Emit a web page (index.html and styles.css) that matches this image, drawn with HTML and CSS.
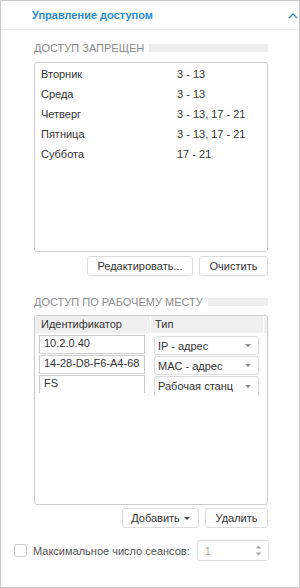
FILE: index.html
```html
<!DOCTYPE html>
<html>

<head>
  <meta charset="utf-8">
  <link rel="stylesheet" href="styles.css">
</head>

<body>

  <div id="panel">

    <div class="panelHeader">
      <span class="panelTitle">Управление доступом</span>
      <svg class="chevron" width="10" height="7" viewBox="0 0 10 7">
        <path d="M1 6 L5 2 L9 6" fill="none" stroke="#2a8ad4" stroke-width="1.4" />
      </svg>
    </div>

    <div class="section">
      <div class="sectionTitle">
        <span>ДОСТУП ЗАПРЕЩЕН</span>
        <div class="titleBar"></div>
      </div>

      <div class="listBox">
        <div class="listRow"><span>Вторник</span><span>3 - 13</span></div>
        <div class="listRow"><span>Среда</span><span>3 - 13</span></div>
        <div class="listRow"><span>Четверг</span><span>3 - 13, 17 - 21</span></div>
        <div class="listRow"><span>Пятница</span><span>3 - 13, 17 - 21</span></div>
        <div class="listRow"><span>Суббота</span><span>17 - 21</span></div>
      </div>

      <div class="buttons">
        <button class="btn" id="editBtn">Редактировать...</button>
        <button class="btn" id="clearBtn">Очистить</button>
      </div>
    </div>

    <div class="section">
      <div class="sectionTitle second">
        <span>ДОСТУП ПО РАБОЧЕМУ МЕСТУ</span>
        <div class="titleBar"></div>
      </div>

      <div class="tableBox">
        <div class="tableHead">
          <div class="colId">Идентификатор</div>
          <div class="colType">Тип</div>
          <div class="colRest"></div>
        </div>
        <div class="tableRow">
          <div class="cellInput">10.2.0.40</div>
          <div class="cellSelect"><span>IP - адрес</span><i class="caret"></i></div>
        </div>
        <div class="tableRow">
          <div class="cellInput">14-28-D8-F6-A4-68</div>
          <div class="cellSelect"><span>MAC - адрес</span><i class="caret"></i></div>
        </div>
        <div class="tableRow last">
          <div class="cellInput">FS</div>
          <div class="cellSelect"><span>Рабочая станц</span><i class="caret"></i></div>
        </div>
      </div>

      <div class="buttons second">
        <button class="btn" id="addBtn">Добавить <i class="caret dark"></i></button>
        <button class="btn" id="delBtn">Удалить</button>
      </div>
    </div>

    <div class="sessions">
      <div class="checkbox"></div>
      <span class="sessionsLabel">Максимальное число сеансов:</span>
      <div class="spinner">
        <span>1</span>
        <div class="arrows">
          <svg width="7" height="4" viewBox="0 0 7 4"><path d="M0.5 3.5 L3.5 0.5 L6.5 3.5 Z" fill="#aaa" /></svg>
          <svg width="7" height="4" viewBox="0 0 7 4"><path d="M0.5 0.5 L3.5 3.5 L6.5 0.5 Z" fill="#aaa" /></svg>
        </div>
      </div>
    </div>

  </div>
</body>

</html>
```

FILE: styles.css
```css
body {
  margin: 0;
  font-family: "Liberation Sans", Arial, sans-serif;
  font-size: 11px;
  color: #333;
}

#panel {
  width: 300px;
  height: 588px;
  box-sizing: border-box;
  border: 1px solid #c8c8c8;
  background-color: #fff;
}

.panelHeader {
  height: 28px;
  display: flex;
  align-items: center;
  padding-left: 31px;
  padding-right: 1px;
  border-bottom: 1px solid #eee;
}

.panelTitle {
  flex: 1;
  color: #2a8ad4;
  font-weight: bold;
  font-size: 11px;
}

.chevron {
  margin-top: 1px;
}

.section {
  padding: 0 31px 0 33px;
}

.sectionTitle {
  display: flex;
  align-items: center;
  margin-top: 10px;
  height: 16px;
  color: #8a8a8a;
  font-size: 11px;
}

.sectionTitle.second {
  margin-top: 18px;
}

.titleBar {
  flex: 1;
  height: 8px;
  margin-left: 5px;
  background-color: #eee;
}

.listBox {
  height: 187px;
  margin-top: 6px;
  border: 1px solid #ccc;
  border-radius: 3px;
  padding: 1px 5px 0 6px;
}

.listRow {
  display: grid;
  grid-template-columns: 136px 1fr;
  height: 20px;
  line-height: 20px;
}

.buttons {
  display: flex;
  justify-content: flex-end;
  gap: 6px;
  margin-top: 4px;
}

.buttons.second {
  margin-top: 3px;
}

.btn {
  height: 20px;
  padding: 0;
  border: 1px solid #ddd;
  border-radius: 3px;
  background-color: #fff;
  font-family: "Liberation Sans", Arial, sans-serif;
  font-size: 11px;
  color: #333;
}

#editBtn {
  width: 106px;
}

#clearBtn {
  width: 69px;
}

#addBtn {
  width: 77px;
  display: flex;
  align-items: center;
  justify-content: center;
  gap: 4px;
}

#delBtn {
  width: 63px;
}

.tableBox {
  height: 188px;
  margin-top: 5px;
  border: 1px solid #ccc;
  border-radius: 3px;
  overflow: hidden;
}

.tableHead {
  display: flex;
  height: 17px;
  line-height: 16px;
  background-color: #f0f0f0;
  margin-bottom: 2px;
}

.colId {
  width: 109px;
  padding-left: 6px;
  border-right: 1px solid #fff;
}

.colType {
  width: 108px;
  padding-left: 4px;
  border-right: 1px solid #fff;
}

.colRest {
  flex: 1;
}

.tableRow {
  display: flex;
  height: 20px;
  padding-left: 4px;
}

.cellInput {
  width: 100px;
  height: 17px;
  line-height: 15px;
  padding-left: 4px;
  border: 1px solid #ccc;
  white-space: nowrap;
}

.tableRow.last .cellInput {
  border-bottom: none;
}

.cellSelect {
  width: 105px;
  height: 19px;
  margin-left: 9px;
  margin-top: 1px;
  box-sizing: border-box;
  border: 1px solid #ddd;
  border-radius: 3px;
  display: flex;
  align-items: center;
  padding: 0 7px 0 3px;
}

.tableRow.last .cellSelect {
  border-bottom: none;
  border-radius: 3px 3px 0 0;
}

.cellSelect span {
  flex: 1;
  white-space: nowrap;
  overflow: hidden;
}

.caret {
  display: inline-block;
  width: 0;
  height: 0;
  border-left: 3px solid transparent;
  border-right: 3px solid transparent;
  border-top: 3px solid #888;
  margin-left: 3px;
}

.caret.dark {
  border-top-color: #444;
  margin-left: 0;
}

.sessions {
  display: flex;
  align-items: center;
  margin-top: 12px;
  padding-left: 13px;
}

.checkbox {
  width: 11px;
  height: 11px;
  border: 1px solid #ccc;
  border-radius: 3px;
}

.sessionsLabel {
  margin-left: 6px;
  color: #555;
}

.spinner {
  width: 72px;
  height: 21px;
  margin-left: 7px;
  border: 1px solid #ddd;
  border-radius: 3px;
  display: flex;
  align-items: center;
  padding-left: 7px;
  box-sizing: border-box;
  color: #aaa;
}

.spinner span {
  flex: 1;
}

.arrows {
  display: flex;
  flex-direction: column;
  gap: 3px;
  margin-right: 6px;
}

.arrows svg {
  display: block;
}
```
